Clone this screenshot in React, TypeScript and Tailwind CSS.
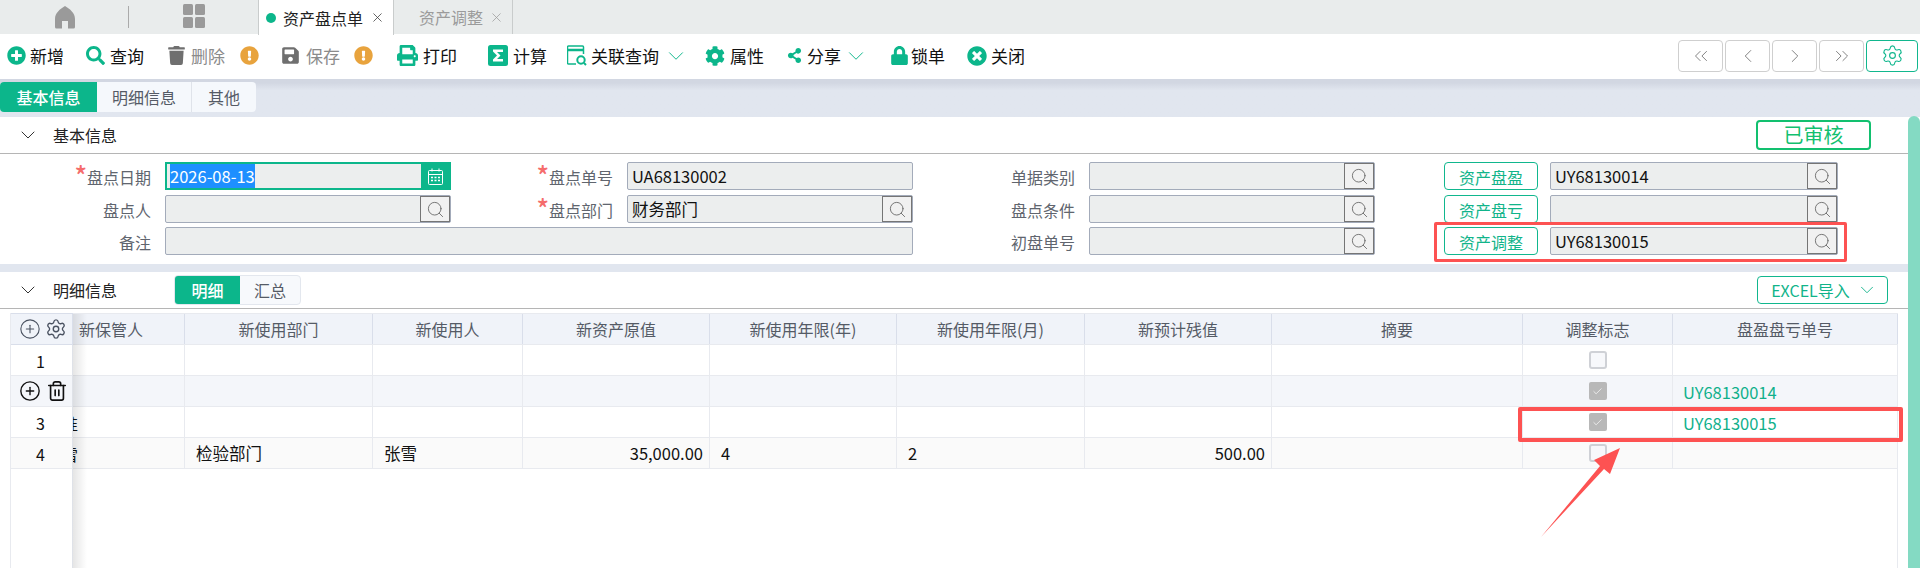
import type { ReactNode } from "react";
import { ChevronDown, ChevronLeft, ChevronRight, ChevronsLeft, ChevronsRight, Settings, Search, CirclePlus, Trash2, X, Check } from "lucide-react";
import { FaPlusCircle, FaSearch, FaTrash, FaSave, FaPrint, FaCog, FaShareAlt, FaLock, FaTimesCircle, FaExclamationCircle, FaHome } from "react-icons/fa";

function ToolItem({ icon, label, className, muted }: { icon: ReactNode; label: string; className: string; muted?: boolean }) {
  return (
    <div className={"flex items-center " + className}>
      {icon}
      <span className={muted ? "text-[#8b8b8b]" : "text-[#111]"}>{label}</span>
    </div>
  );
}

function PagerButton({ children }: { children: ReactNode }) {
  return (
    <button type="button" className="flex h-[32px] w-[45px] items-center justify-center rounded-[4px] border border-[#cfcfcf] bg-white text-[#777]">
      {children}
    </button>
  );
}

function Label({ text, required, className }: { text: string; required?: boolean; className: string }) {
  return (
    <div className={"flex shrink-0 items-center justify-end pt-[2px] text-[#60656e] " + className}>
      {required && <span className="mt-[-4px] text-[26px] leading-none font-medium text-[#f56c6c]">*</span>}
      {text}
    </div>
  );
}

function Input({ value, lookup, className }: { value?: string; lookup?: boolean; className: string }) {
  return (
    <div className={"flex h-full shrink-0 rounded-[2px] border border-[#a3abba] bg-[#eceeee] " + className}>
      <div className="flex-1 truncate px-[4px] text-[16.5px] leading-[26px] text-[#111]">{value}</div>
      {lookup && (
        <div className="flex w-[30px] items-center justify-center border border-[#757575] bg-[#f1f1f1] text-[#666]">
          <Search size={19} strokeWidth={1.1} />
        </div>
      )}
    </div>
  );
}

function LinkButton({ text }: { text: string }) {
  return (
    <div className="ml-[69px] flex h-full w-[94px] shrink-0 items-center justify-center rounded-[4px] border border-[#11b78e] pt-[1px] text-[#11b48a]">
      {text}
    </div>
  );
}

function DateInput() {
  return (
    <div className="ml-[14px] flex h-full w-[286px] shrink-0 bg-[#0cb68b] p-[2px]">
      <div className="flex-1 bg-[#eceeee] pl-[3px] text-[16.5px] leading-[24px]">
        <span className="inline-block bg-[#1e8fff] text-white">2026-08-13</span>
      </div>
      <div className="flex w-[28px] items-center justify-center text-white">
        <svg width="15" height="17" viewBox="0 0 15 17" fill="none" stroke="currentColor" strokeWidth="1">
          <rect x="0.5" y="2.5" width="14" height="14" rx="1" />
          <path d="M0.5 6.5h14M4 0.5v3M11 0.5v3" />
          <path d="M3 9.5h2M6.5 9.5h2M10 9.5h2M3 12.5h2M6.5 12.5h2M10 12.5h2" strokeWidth="1.5" />
        </svg>
      </div>
    </div>
  );
}

const cols = ["w-[62px]", "w-[112px]", "w-[188px]", "w-[150px]", "w-[187px]", "w-[187px]", "w-[188px]", "w-[187px]", "w-[251px]", "w-[150px]", "w-[225px]"];
const headers = ["", "新保管人", "新使用部门", "新使用人", "新资产原值", "新使用年限(年)", "新使用年限(月)", "新预计残值", "摘要", "调整标志", "盘盈盘亏单号"];

function Box({ checked }: { checked?: boolean }) {
  return checked ? (
    <div className="flex h-[18px] w-[18px] items-center justify-center rounded-[2px] bg-[#b8b8b8] text-white">
      <Check size={11} strokeWidth={1.5} />
    </div>
  ) : (
    <div className="h-[18px] w-[18px] rounded-[3px] border-2 border-[#cfd1d6] bg-[#f7f8fb]" />
  );
}

function Row({ cells, className }: { cells: ReactNode[]; className: string }) {
  return (
    <div className={"flex h-[31px] border-b border-[#e8eaef] " + className}>
      {cells.map((cell, i) => (
        <div key={i} className={"relative flex shrink-0 items-center overflow-hidden border-r border-[#e8eaef] " + cols[i]}>
          {cell}
        </div>
      ))}
    </div>
  );
}

const RowNumber = ({ n }: { n: number }) => <span className="w-full pt-[1px] pr-[2px] text-center text-[#111]">{n}</span>;
const Clipped = ({ text }: { text: string }) => <span className="ml-[-11px] pt-[1px] text-[#111]">{text}</span>;
const Left = ({ text }: { text: string }) => <span className="pt-[1px] pl-[11px] text-[16.5px] text-[#111]">{text}</span>;
const Right = ({ text }: { text: string }) => <span className="w-full pt-[1px] pr-[6px] text-right text-[16.5px] text-[#111]">{text}</span>;
const Centered = ({ children }: { children: ReactNode }) => <div className="flex w-full justify-center">{children}</div>;
const Code = ({ text }: { text: string }) => <span className="pt-[2px] pl-[10px] text-[16.5px] text-[#0fb08b]">{text}</span>;

export default function App() {
  const empty = ["", "", "", "", "", "", ""];
  return (
    <div className="relative h-[568px] w-[1920px] overflow-hidden bg-white font-['Noto_Sans_CJK_SC','Noto_Sans',sans-serif] text-[16px] leading-none">
      {/* window tabs */}
      <div className="flex h-[34px] bg-[#e9ecec]">
        <div className="my-[6px] flex w-[129px] items-center justify-center border-r border-[#aaa] pl-[1px] text-[#9a9a9a]">
          <svg width="20" height="24" viewBox="0 0 20 24" fill="currentColor">
            <path d="M10 1C5 4 0 8 0 14v8a1.5 1.5 0 0 0 1.5 1.5H7V16h6v7.5h5.5A1.5 1.5 0 0 0 20 22v-8c0-6-5-10-10-13z" />
          </svg>
        </div>
        <div className="flex w-[129px] items-center justify-center pb-[3px]">
          <svg width="22" height="24" viewBox="0 0 22 24" fill="#9a9a9a">
            <rect width="10" height="11" rx="1.5" />
            <rect x="12" width="10" height="11" rx="1.5" />
            <rect y="13" width="10" height="11" rx="1.5" />
            <rect x="12" y="13" width="10" height="11" rx="1.5" />
          </svg>
        </div>
        <div className="flex h-[35px] w-[136px] items-center border-x border-[#c9cccc] bg-white pl-[7px]">
          <span className="h-[10px] w-[10px] rounded-full bg-[#0cb68b]" />
          <span className="ml-[7px] text-[16px] text-[#222]">资产盘点单</span>
          <X size={15} strokeWidth={1.2} className="ml-[7px] text-[#333]" />
        </div>
        <div className="flex w-[119px] items-center border-r border-[#c9cccc] pl-[25px] text-[16px] text-[#9b9b9b]">
          资产调整
          <X size={15} strokeWidth={1.2} className="ml-[6px]" />
        </div>
      </div>

      {/* toolbar */}
      <div className="flex h-[45px] items-center justify-between pr-[2px] pb-[2px] text-[17px]">
        <div className="flex items-center text-[#0cb68b]">
          <ToolItem className="ml-[7px] gap-[4px]" icon={<FaPlusCircle size={19} />} label="新增" />
          <ToolItem className="ml-[22px] gap-[5px]" icon={<FaSearch size={19} />} label="查询" />
          <ToolItem className="ml-[23px] gap-[5px] text-[#6f6f6f]" icon={<FaTrash size={19} />} label="删除" muted />
          <FaExclamationCircle size={19} className="ml-[15px] text-[#e8a33d]" />
          <ToolItem className="ml-[22px] gap-[6px] text-[#6f6f6f]" icon={<FaSave size={19} />} label="保存" muted />
          <FaExclamationCircle size={19} className="ml-[14px] text-[#e8a33d]" />
          <ToolItem className="ml-[24px] gap-[5px]" icon={<FaPrint size={21} />} label="打印" />
          <div className="ml-[31px] flex items-center gap-[5px]">
            <svg width="20" height="21" viewBox="0 0 20 21">
              <rect width="20" height="21" rx="2.5" fill="#0cb68b" />
              <path d="M5 4.5h10v2.5H9l3.5 3.5L9 14h6v2.5H5v-2l4-4-4-4z" fill="#fff" />
            </svg>
            <span className="text-[#111]">计算</span>
          </div>
          <div className="ml-[20px] flex items-center gap-[4px]">
            <svg width="20" height="21" viewBox="0 0 20 21" fill="none" stroke="#0cb68b" strokeWidth="1.5">
              <path d="M9 19H1.5a1 1 0 0 1-1-1V2a1 1 0 0 1 1-1h14a1 1 0 0 1 1 1v7" />
              <path d="M1 5h15" strokeWidth="2.5" />
              <circle cx="14" cy="15" r="3.7" strokeWidth="2" />
              <path d="M17 18l2 2" strokeWidth="2" />
            </svg>
            <span className="text-[#111]">关联查询</span>
            <ChevronDown size={26} strokeWidth={0.9} />
          </div>
          <ToolItem className="ml-[16px] gap-[5px]" icon={<FaCog size={20} />} label="属性" />
          <ToolItem className="ml-[23px] gap-[5px]" icon={<FaShareAlt size={15} />} label="分享" />
          <ChevronDown size={26} strokeWidth={0.9} className="ml-[2px]" />
          <ToolItem className="ml-[21px] gap-[2px]" icon={<FaLock size={19} />} label="锁单" />
          <ToolItem className="ml-[22px] gap-[4px]" icon={<FaTimesCircle size={20} />} label="关闭" />
        </div>
        <div className="flex gap-[2px]">
          <PagerButton><ChevronsLeft size={22} strokeWidth={1} /></PagerButton>
          <PagerButton><ChevronLeft size={22} strokeWidth={1} /></PagerButton>
          <PagerButton><ChevronRight size={22} strokeWidth={1} /></PagerButton>
          <PagerButton><ChevronsRight size={22} strokeWidth={1} /></PagerButton>
          <button type="button" className="flex h-[32px] w-[52px] items-center justify-center rounded-[4px] border border-[#11b78e] text-[#11b78e]">
            <Settings size={23} strokeWidth={1.2} />
          </button>
        </div>
      </div>

      {/* page tabs */}
      <div className="flex h-[38px] items-start bg-gradient-to-b from-[#d2d7e2] from-[10%] to-[#e1e6ef] to-[30%] pt-[3px]">
        <div className="flex h-[30px] w-[256px] overflow-hidden rounded-[4px] bg-[#f5f8fc]">
          <div className="flex w-[97px] items-center justify-center bg-[#0cb68b] font-medium text-white">基本信息</div>
          <div className="flex w-[95px] items-center justify-center border-r border-[#dfe3ea] text-[#555b66]">明细信息</div>
          <div className="flex flex-1 items-center justify-center text-[#555b66]">其他</div>
        </div>
      </div>

      {/* basic info */}
      <div className="flex h-[37px] items-center justify-between border-b border-[#b5b5b5] pr-[49px]">
        <div className="flex items-center">
          <ChevronDown size={24} strokeWidth={1} className="ml-[16px] text-[#333]" />
          <span className="ml-[13px] text-[#222]">基本信息</span>
        </div>
        <div className="flex h-[30px] w-[115px] items-center justify-center rounded-[4px] border-2 border-[#12c06f] text-[20px] text-[#12c06f]">已审核</div>
      </div>
      <div className="h-[110px] pt-[8px]">
        <div className="flex h-[28px]">
          <Label className="w-[151px]" text="盘点日期" required />
          <DateInput />
          <Label className="w-[162px]" text="盘点单号" required />
          <Input className="ml-[14px] w-[286px]" value="UA68130002" />
          <Label className="w-[162px]" text="单据类别" />
          <Input className="ml-[14px] w-[286px]" lookup />
          <LinkButton text="资产盘盈" />
          <Input className="ml-[12px] w-[288px]" value="UY68130014" lookup />
        </div>
        <div className="mt-[5px] flex h-[28px]">
          <Label className="w-[151px]" text="盘点人" />
          <Input className="ml-[14px] w-[286px]" lookup />
          <Label className="w-[162px]" text="盘点部门" required />
          <Input className="ml-[14px] w-[286px]" value="财务部门" lookup />
          <Label className="w-[162px]" text="盘点条件" />
          <Input className="ml-[14px] w-[286px]" lookup />
          <LinkButton text="资产盘亏" />
          <Input className="ml-[12px] w-[288px]" lookup />
        </div>
        <div className="mt-[4px] flex h-[28px]">
          <Label className="w-[151px]" text="备注" />
          <Input className="ml-[14px] w-[748px]" />
          <Label className="w-[162px]" text="初盘单号" />
          <Input className="ml-[14px] w-[286px]" lookup />
          <LinkButton text="资产调整" />
          <Input className="ml-[12px] w-[288px]" value="UY68130015" lookup />
        </div>
      </div>
      <div className="h-[8px] bg-[#e1e6ef]" />

      {/* detail info */}
      <div className="flex h-[37px] items-center justify-between border-b border-[#b5b5b5] pr-[32px]">
        <div className="flex items-center">
          <ChevronDown size={24} strokeWidth={1} className="ml-[16px] text-[#333]" />
          <span className="ml-[13px] text-[#222]">明细信息</span>
          <div className="ml-[57px] flex h-[30px] w-[127px] overflow-hidden rounded-[4px] border border-[#e3e7ee] bg-[#f7f9fc]">
            <div className="flex w-[65px] items-center justify-center bg-[#0cb68b] font-medium text-white">明细</div>
            <div className="flex flex-1 items-center justify-center text-[#555b66]">汇总</div>
          </div>
        </div>
        <div className="flex h-[28px] w-[131px] items-center justify-center rounded-[4px] border border-[#11b78e] pl-[4px] text-[#11b48a]">
          EXCEL导入
          <ChevronDown size={22} strokeWidth={1} className="ml-[6px]" />
        </div>
      </div>

      {/* grid */}
      <div className="relative mt-[4px] ml-[10px] h-[255px] w-[1888px] border-x border-[#e8eaef]">
        <div className="flex h-[32px] border-y border-[#e8eaef] bg-[#f0f3f9]">
          {headers.map((h, i) => (
            <div key={i} className={"flex shrink-0 items-center border-r border-[#d9deea] text-[#555b66] " + (i === 1 ? "pl-[6px] " : "justify-center ") + cols[i]}>
              {h}
            </div>
          ))}
        </div>
        <Row className="bg-white" cells={[<RowNumber n={1} />, "", ...empty, <Centered><Box /></Centered>, ""]} />
        <Row
          className="bg-[#f4f6fa]"
          cells={[
            <div className="flex w-full items-center gap-[5px] pl-[8px] text-[#111]">
              <CirclePlus size={22} strokeWidth={1.5} />
              <Trash2 size={22} strokeWidth={1.8} />
            </div>,
            "",
            ...empty,
            <Centered><Box checked /></Centered>,
            <Code text="UY68130014" />,
          ]}
        />
        <Row className="bg-white" cells={[<RowNumber n={3} />, <Clipped text="准" />, ...empty, <Centered><Box checked /></Centered>, <Code text="UY68130015" />]} />
        <Row
          className="bg-[#fafafa]"
          cells={[
            <RowNumber n={4} />,
            <Clipped text="雪" />,
            <Left text="检验部门" />,
            <Left text="张雪" />,
            <Right text="35,000.00" />,
            <Left text="4" />,
            <Left text="2" />,
            <Right text="500.00" />,
            "",
            <Centered><Box /></Centered>,
            "",
          ]}
        />

        {/* frozen column header and shadow */}
        <div className="absolute top-0 left-0 flex h-[32px] w-[62px] items-center gap-[4px] border-y border-r border-[#d9deea] bg-[#f0f3f9] pl-[8px] text-[#4a5261]">
          <CirclePlus size={22} strokeWidth={1.2} />
          <Settings size={22} strokeWidth={1.5} />
        </div>
        <div className="absolute top-[32px] bottom-0 left-[61px] w-px bg-[#dfe2e8]" />
        <div className="absolute top-[1px] bottom-0 left-[62px] w-[14px] bg-gradient-to-r from-black/10 to-transparent" />
      </div>

      {/* scrollbar */}
      <div className="absolute top-[116px] right-0 bottom-0 w-[12px] rounded-t-[6px] bg-[#84dac3]" />

      {/* annotations */}
      <div className="absolute top-[222px] left-[1434px] h-[40px] w-[413px] rounded-[2px] border-[3px] border-[#fd5252]" />
      <div className="absolute top-[407px] left-[1518px] h-[35px] w-[385px] rounded-[2px] border-4 border-[#fd5252]" />
      <svg className="absolute top-0 left-0" width="1920" height="568" fill="#fd5252">
        <polygon points="1541,537 1600,466 1594,460 1620,448 1610,474 1604,469" />
      </svg>
    </div>
  );
}
